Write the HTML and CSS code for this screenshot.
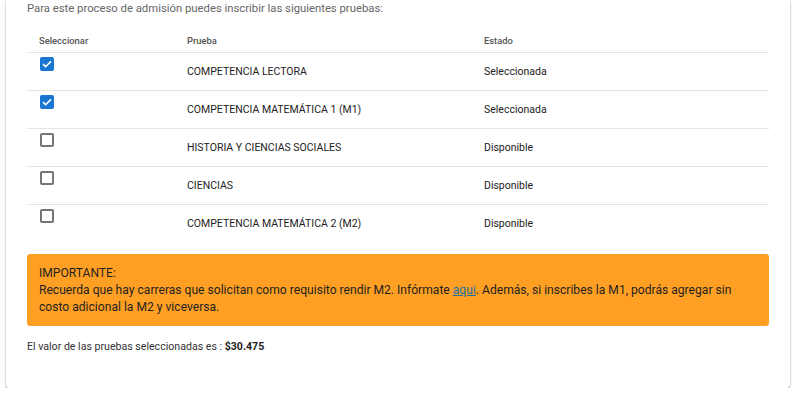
FILE: index.html
```html
<!DOCTYPE html>
<html lang="es">
<head>
    <meta charset="UTF-8">
    <meta name="viewport" content="width=device-width, initial-scale=1.0">
    <title>Inscripción de pruebas</title>
    <link rel="stylesheet" href="styles.css">
</head>
<body>
    <div class="card">
        <p class="intro">Para este proceso de admisión puedes inscribir las siguientes pruebas:</p>

        <div class="tabla">
            <div class="fila cabecera">
                <div class="col-sel">Seleccionar</div>
                <div>Prueba</div>
                <div>Estado</div>
            </div>
            <div class="fila">
                <div class="col-sel"><span class="check marcado"></span></div>
                <div>COMPETENCIA LECTORA</div>
                <div>Seleccionada</div>
            </div>
            <div class="fila">
                <div class="col-sel"><span class="check marcado"></span></div>
                <div>COMPETENCIA MATEMÁTICA 1 (M1)</div>
                <div>Seleccionada</div>
            </div>
            <div class="fila">
                <div class="col-sel"><span class="check"></span></div>
                <div>HISTORIA Y CIENCIAS SOCIALES</div>
                <div>Disponible</div>
            </div>
            <div class="fila">
                <div class="col-sel"><span class="check"></span></div>
                <div>CIENCIAS</div>
                <div>Disponible</div>
            </div>
            <div class="fila">
                <div class="col-sel"><span class="check"></span></div>
                <div>COMPETENCIA MATEMÁTICA 2 (M2)</div>
                <div>Disponible</div>
            </div>
        </div>

        <div class="aviso">
            IMPORTANTE:<br>
            Recuerda que hay carreras que solicitan como requisito rendir M2. Infórmate <a href="">aqui</a>. Además, si inscribes la M1, podrás agregar sin costo adicional la M2 y viceversa.
        </div>

        <p class="total">El valor de las pruebas seleccionadas es : <b>$30.475</b></p>
    </div>
</body>
</html>
```

FILE: styles.css
```css
body,p{
    margin: 0;
    padding: 0;
}
body{
    background: #fff;
    font-family: Roboto, "Liberation Sans", sans-serif;
    color: #222;
}
.card{
    margin: 0 10px 0 6px;
    padding: 0 21px 34px;
    background: #fff;
    border-radius: 0 0 4px 4px;
    box-shadow: 0 1px 3px rgba(0,0,0,.3), 0 1px 1px rgba(0,0,0,.14);
}
.intro{
    font-size: 11.3px;
    line-height: 18px;
    color: #666;
}
.tabla{
    margin-top: 10px;
}
.fila{
    display: grid;
    grid-template-columns: 160px 297px 1fr;
    height: 37px;
    align-items: center;
    font-size: 10.5px;
    color: #222;
    border-top: 1px solid #e4e4e4;
}
.fila.cabecera{
    height: 24px;
    border-top: 0;
    font-size: 9.4px;
    font-weight: 500;
    color: #555;
}
.col-sel{
    padding-left: 12px;
}
.fila .col-sel{
    align-self: start;
    padding-top: 4px;
}
.fila.cabecera .col-sel{
    align-self: center;
    padding-top: 0;
}
.check{
    display: block;
    width: 10px;
    height: 10px;
    margin-left: 1px;
    border: 2px solid #757575;
    border-radius: 2px;
}
.check.marcado{
    width: 14px;
    height: 14px;
    border: 0;
    background: #1976d2 url("data:image/svg+xml,%3Csvg xmlns='http://www.w3.org/2000/svg' viewBox='0 0 14 14'%3E%3Cpath d='M3 7.2l2.6 2.5L11 4.4' fill='none' stroke='%23fff' stroke-width='1.6'/%3E%3C/svg%3E") no-repeat center;
}
.aviso{
    margin-top: 12px;
    padding: 11px 12px 10px;
    background: #ffa024;
    border-radius: 3px;
    font-size: 12.1px;
    line-height: 17px;
    color: #1f1f1f;
}
.aviso a{
    color: #1b6fa0;
    text-decoration: underline;
}
.total{
    margin-top: 14px;
    font-size: 10.6px;
    line-height: 14px;
    color: #333;
}
.total b{
    font-weight: 700;
    color: #222;
}
```
